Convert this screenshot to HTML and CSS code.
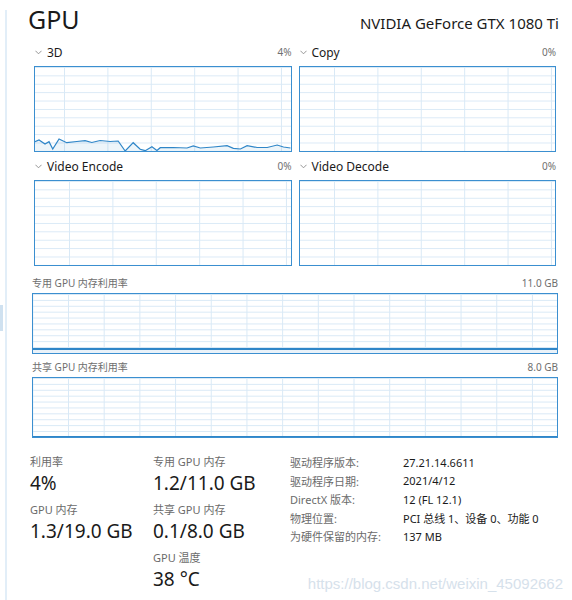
FILE: index.html
```html
<!DOCTYPE html>
<html lang="zh-CN">
<head>
	<meta charset="UTF-8">
	<title>GPU</title>
	<link rel="stylesheet" href="styles.css">
</head>
<body>
	<div class="window">
		<div class="gutter"><div class="thumb"></div></div>
		<div class="divider"></div>
		<div class="main">
			<div class="head">
				<h1 class="title">GPU</h1>
				<div class="model">NVIDIA GeForce GTX 1080 Ti</div>
			</div>

			<div class="engines">
				<div class="engine">
					<div class="engine-top">
						<span class="engine-name"><svg class="chev" viewBox="0 0 8 5"><polyline points="0.5,0.5 4,4 7.5,0.5"/></svg>3D</span>
						<span class="pct">4%</span>
					</div>
					<div class="chart chart-a">
						<svg class="plot" viewBox="0 0 255 84" preserveAspectRatio="none">
							<polygon class="area" points="0,74.7 4,73 10,77 14,74.7 17.7,82 24,72 31.7,75.7 41.7,74.5 50,73.7 56.7,75.5 65,73.5 75,74.5 83,74 90,84 98,75.7 105,82.3 110,83.7 116.7,79.7 121.7,83.5 125,80.7 138,80.5 151.7,81 158,79 165,81 178,80 191.7,78.7 198,81.3 205,82 211.7,78.7 221.7,80.5 231.7,80.5 241.7,78 248,80 255,81 255,84 0,84"/>
							<polyline class="line" points="0,74.7 4,73 10,77 14,74.7 17.7,82 24,72 31.7,75.7 41.7,74.5 50,73.7 56.7,75.5 65,73.5 75,74.5 83,74 90,84 98,75.7 105,82.3 110,83.7 116.7,79.7 121.7,83.5 125,80.7 138,80.5 151.7,81 158,79 165,81 178,80 191.7,78.7 198,81.3 205,82 211.7,78.7 221.7,80.5 231.7,80.5 241.7,78 248,80 255,81"/>
						</svg>
					</div>
				</div>
				<div class="engine">
					<div class="engine-top">
						<span class="engine-name"><svg class="chev" viewBox="0 0 8 5"><polyline points="0.5,0.5 4,4 7.5,0.5"/></svg>Copy</span>
						<span class="pct">0%</span>
					</div>
					<div class="chart"></div>
				</div>
				<div class="engine">
					<div class="engine-top">
						<span class="engine-name"><svg class="chev" viewBox="0 0 8 5"><polyline points="0.5,0.5 4,4 7.5,0.5"/></svg>Video Encode</span>
						<span class="pct">0%</span>
					</div>
					<div class="chart"></div>
				</div>
				<div class="engine">
					<div class="engine-top">
						<span class="engine-name"><svg class="chev" viewBox="0 0 8 5"><polyline points="0.5,0.5 4,4 7.5,0.5"/></svg>Video Decode</span>
						<span class="pct">0%</span>
					</div>
					<div class="chart"></div>
				</div>
			</div>

			<div class="mem mem-first">
				<div class="mem-top"><span>专用 GPU 内存利用率</span><span>11.0 GB</span></div>
				<div class="mchart"><div class="mfill"></div></div>
			</div>
			<div class="mem">
				<div class="mem-top"><span>共享 GPU 内存利用率</span><span>8.0 GB</span></div>
				<div class="mchart"><div class="mfill mfill-low"></div></div>
			</div>

			<div class="stats">
				<div class="stat-col">
					<div class="stat"><div class="stat-label">利用率</div><div class="stat-value">4%</div></div>
					<div class="stat"><div class="stat-label">GPU 内存</div><div class="stat-value">1.3/19.0 GB</div></div>
				</div>
				<div class="stat-col">
					<div class="stat"><div class="stat-label">专用 GPU 内存</div><div class="stat-value">1.2/11.0 GB</div></div>
					<div class="stat"><div class="stat-label">共享 GPU 内存</div><div class="stat-value">0.1/8.0 GB</div></div>
					<div class="stat"><div class="stat-label">GPU 温度</div><div class="stat-value">38 °C</div></div>
				</div>
				<div class="info-col">
					<table class="info">
						<tr><td>驱动程序版本:</td><td>27.21.14.6611</td></tr>
						<tr><td>驱动程序日期:</td><td>2021/4/12</td></tr>
						<tr><td>DirectX 版本:</td><td>12 (FL 12.1)</td></tr>
						<tr><td>物理位置:</td><td>PCI 总线 1、设备 0、功能 0</td></tr>
						<tr><td>为硬件保留的内存:</td><td>137 MB</td></tr>
					</table>
					<div class="mark">https://blog.csdn.net/weixin_45092662</div>
				</div>
			</div>
		</div>
	</div>
</body>
</html>
```

FILE: styles.css
```css
*{
	margin:0;
	padding:0;
	box-sizing:border-box;
}
body{
	font-family:"Noto Sans","Noto Sans CJK SC",sans-serif;
	color:#1a1a1a;
	background:#fff;
}
.window{
	display:flex;
	width:572px;
	height:600px;
	overflow:hidden;
}
/* left edge: scroll thumb + pane divider */
.gutter{
	width:5px;
}
.thumb{
	width:3px;
	height:26px;
	margin-top:305px;
	background:#cfe1f0;
}
.divider{
	width:2px;
	margin-top:10px;
	background:#e2eef8;
}
.main{
	flex:1;
	min-width:0;
	padding:0 14px 0 25px;
}
.head{
	height:38px;
	display:flex;
	justify-content:space-between;
	align-items:baseline;
}
.title{
	font-size:25px;
	font-weight:normal;
	line-height:38px;
	margin-left:-4px;
}
.model{
	font-size:15px;
	white-space:nowrap;
	margin-right:-1px;
}

/* engine charts */
.engines{
	display:grid;
	grid-template-columns:1fr 1fr;
	column-gap:7px;
	margin:0 2px;
}
.engine-top{
	height:28px;
	display:flex;
	justify-content:space-between;
	align-items:center;
}
.engine-name{
	display:flex;
	align-items:center;
	font-size:12px;
}
.chev{
	width:7px;
	height:5px;
	margin:0 5px 0 1px;
	fill:none;
	stroke:#888;
	stroke-width:1;
}
.pct{
	font-size:10px;
	color:#707070;
}
.chart{
	height:86px;
	border:1px solid #3b8fd0;
	background-color:#fff;
	background-image:linear-gradient(to right,#d9e9f6 1px,transparent 1px),linear-gradient(to bottom,#d9e9f6 1px,transparent 1px);
	background-size:43.4px 100%,100% 8.4px;
	background-position:34px 0,0 0;
}
.chart-a{
	background-position:29px 0,0 0;
}
.plot{
	display:block;
	width:100%;
	height:100%;
}
.plot .area{
	fill:#1c7cc4;
	fill-opacity:0.08;
}
.plot .line{
	fill:none;
	stroke:#2f86c8;
	stroke-width:1.2;
}

/* memory charts */
.mem-first{
	margin-top:4px;
}
.mem-top{
	height:23px;
	display:flex;
	justify-content:space-between;
	align-items:flex-end;
	padding-bottom:2px;
	font-size:10px;
	line-height:16px;
	color:#6e6e6e;
}
.mchart{
	height:61px;
	display:flex;
	flex-direction:column;
	justify-content:flex-end;
	border:1px solid #3b8fd0;
	background-image:linear-gradient(to right,#d9e9f6 1px,transparent 1px),linear-gradient(to bottom,#d9e9f6 1px,transparent 1px);
	background-size:35.7px 100%,100% 5.9px;
	background-position:35px 0,0 0;
}
.mfill{
	height:5px;
	border-top:2px solid #2f86c8;
	background:#eaf2f9;
}
.mfill-low{
	height:1px;
	border-top-width:1px;
}

/* numbers under the charts */
.stats{
	display:grid;
	grid-template-columns:123px 137px 1fr;
	align-items:start;
	margin:16px 0 0 -2px;
}
.stat{
	margin-bottom:6px;
}
.stat-label{
	font-size:11px;
	line-height:16px;
	color:#6b6b6b;
}
.stat-value{
	font-size:19px;
	line-height:26px;
}
.info{
	border-collapse:collapse;
	font-size:11px;
	margin-top:-1px;
}
.info td{
	height:18.5px;
	padding:0;
	white-space:nowrap;
}
.info td:first-child{
	width:113px;
	color:#6b6b6b;
}
.mark{
	margin:28px -5px 0 0;
	text-align:right;
	font-family:"Liberation Sans",sans-serif;
	font-size:15px;
	line-height:20px;
	color:#d6e1eb;
	white-space:nowrap;
}
```
